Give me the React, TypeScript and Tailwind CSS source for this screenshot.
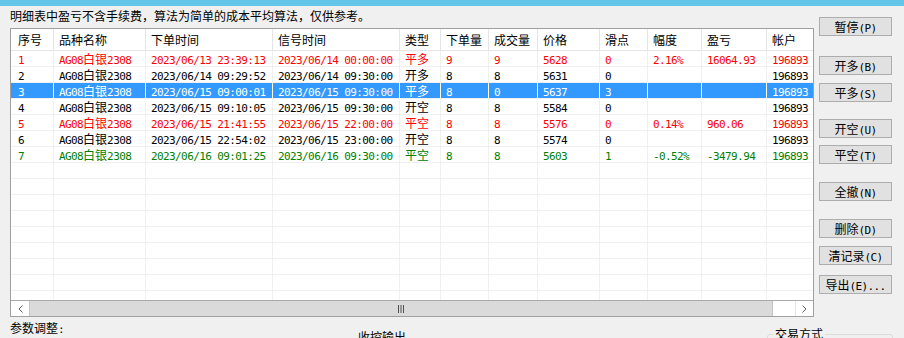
import React from "react";

type Tone = "red" | "black" | "green" | "sel";

type Row = {
  tone: Tone;
  cells: string[];
};

const HEADERS = ["序号", "品种名称", "下单时间", "信号时间", "类型", "下单量", "成交量", "价格", "滑点", "幅度", "盈亏", "帐户"];

const ROWS: Row[] = [
  { tone: "red", cells: ["1", "AG08白银2308", "2023/06/13 23:39:13", "2023/06/14 00:00:00", "平多", "9", "9", "5628", "0", "2.16%", "16064.93", "196893"] },
  { tone: "black", cells: ["2", "AG08白银2308", "2023/06/14 09:29:52", "2023/06/14 09:30:00", "开多", "8", "8", "5631", "0", "", "", "196893"] },
  { tone: "sel", cells: ["3", "AG08白银2308", "2023/06/15 09:00:01", "2023/06/15 09:30:00", "平多", "8", "0", "5637", "3", "", "", "196893"] },
  { tone: "black", cells: ["4", "AG08白银2308", "2023/06/15 09:10:05", "2023/06/15 09:30:00", "开空", "8", "8", "5584", "0", "", "", "196893"] },
  { tone: "red", cells: ["5", "AG08白银2308", "2023/06/15 21:41:55", "2023/06/15 22:00:00", "平空", "8", "8", "5576", "0", "0.14%", "960.06", "196893"] },
  { tone: "black", cells: ["6", "AG08白银2308", "2023/06/15 22:54:02", "2023/06/15 23:00:00", "开空", "8", "8", "5574", "0", "", "", "196893"] },
  { tone: "green", cells: ["7", "AG08白银2308", "2023/06/16 09:01:25", "2023/06/16 09:30:00", "平空", "8", "8", "5603", "1", "-0.52%", "-3479.94", "196893"] },
];

const EMPTY_ROWS = 9;

const TONE: Record<Tone, string> = {
  red: "text-[#ff0000]",
  black: "text-black",
  green: "text-[#008000]",
  sel: "bg-[#3399ff] text-white",
};

const GRID = "grid grid-cols-[43px_92px_127px_127px_41px_48px_49px_62px_48px_54px_65px_60px]";

// latin runs in a mono face (SimSun-like 6px cells), CJK in Noto
function Txt({ s }: { s: string }) {
  const parts = s.match(/[\x00-\x7f]+|[^\x00-\x7f]+/g) ?? [];
  return (
    <>
      {parts.map((p, i) =>
        /^[\x00-\x7f]/.test(p) ? (
          <span key={i} className="font-['DejaVu_Sans_Mono',monospace] text-[11px] tracking-[-0.6px]">
            {p}
          </span>
        ) : (
          <span key={i}>{p}</span>
        )
      )}
    </>
  );
}

function Chevron({ dir }: { dir: "left" | "right" }) {
  return (
    <svg width="5" height="8" viewBox="0 0 5 8" fill="none">
      <path
        d={dir === "left" ? "M4.5 0.5 L1 4 L4.5 7.5" : "M0.5 0.5 L4 4 L0.5 7.5"}
        stroke="#606060"
        strokeWidth="1"
      />
    </svg>
  );
}

function Btn({ label, className }: { label: string; className: string }) {
  return (
    <button
      className={`h-[19px] w-[73px] border border-[#adadad] bg-[#e1e1e1] text-center leading-[17px] whitespace-nowrap ${className}`}
    >
      <Txt s={label} />
    </button>
  );
}

export default function App() {
  return (
    <div className="h-[338px] w-[904px] overflow-hidden bg-[#f0f0f0] font-['Noto_Sans_CJK_SC',sans-serif] text-[12px] text-black">
      <div className="h-[6px] bg-[#63c6e9]" />

      <div className="flex">
        <div className="ml-[10px] w-[804px]">
          <div className="h-[22px] whitespace-nowrap leading-[19px]">
            明细表中盈亏不含手续费，算法为简单的成本平均算法，仅供参考。
          </div>

          <div className="flex h-[289px] flex-col overflow-hidden border border-[#a0a0a0] bg-white">
            <div className="flex-1 overflow-hidden">
              <div className={`${GRID} h-[22px] border-b border-[#e5e5e5]`}>
                {HEADERS.map((h, i) => (
                  <div
                    key={h}
                    className={`overflow-hidden whitespace-nowrap border-r border-[#e5e5e5] leading-[21px] ${i === 0 ? "pl-[7px]" : "pl-[5px]"}`}
                  >
                    {h}
                  </div>
                ))}
              </div>

              {ROWS.map((r, ri) => (
                <div key={ri} className={`${GRID} h-[16px] border-b border-[#f0f0f0] ${TONE[r.tone]}`}>
                  {r.cells.map((c, i) => (
                    <div
                      key={i}
                      className={`overflow-hidden whitespace-nowrap border-r leading-[15px] ${r.tone === "sel" ? "border-white" : "border-[#f0f0f0]"} ${i === 0 ? "pl-[7px]" : "pl-[5px]"}`}
                    >
                      <Txt s={c} />
                    </div>
                  ))}
                </div>
              ))}

              {Array.from({ length: EMPTY_ROWS }).map((_, ri) => (
                <div key={ri} className={`${GRID} h-[16px] border-b border-[#f0f0f0]`}>
                  {HEADERS.map((h) => (
                    <div key={h} className="border-r border-[#f0f0f0]" />
                  ))}
                </div>
              ))}
            </div>

            <div className="flex h-[16px] border-t border-[#a9a9a9]">
              <div className="flex w-[18px] items-center justify-center bg-white">
                <Chevron dir="left" />
              </div>
              <div className="flex w-[744px] items-center justify-center border-x border-[#c4c4c4] bg-[#dadada]">
                <svg width="6" height="8" viewBox="0 0 6 8">
                  <rect x="0" y="0" width="1" height="8" fill="#505050" />
                  <rect x="2.5" y="0" width="1" height="8" fill="#505050" />
                  <rect x="5" y="0" width="1" height="8" fill="#505050" />
                </svg>
              </div>
              <div className="flex-1 bg-white" />
              <div className="flex w-[18px] items-center justify-center border-l border-[#e6e6e6] bg-white">
                <Chevron dir="right" />
              </div>
            </div>
          </div>
        </div>

        <div className="ml-[5px] flex w-[73px] flex-col">
          <Btn label="暂停(P)" className="mt-[11px]" />
          <Btn label="开多(B)" className="mt-[20px]" />
          <Btn label="平多(S)" className="mt-[8px]" />
          <Btn label="开空(U)" className="mt-[17px]" />
          <Btn label="平空(T)" className="mt-[7px]" />
          <Btn label="全撤(N)" className="mt-[18px]" />
          <Btn label="删除(D)" className="mt-[18px]" />
          <Btn label="清记录(C)" className="mt-[8px]" />
          <Btn label="导出(E)..." className="mt-[10px]" />
        </div>
      </div>

      <div className="flex items-start">
        <div className="ml-[10px] mt-[3px] whitespace-nowrap leading-[16px]">
          <Txt s="参数调整:" />
        </div>
        <div className="ml-[294px] mt-[12px] whitespace-nowrap leading-[16px]">收控输出</div>
        <fieldset className="ml-auto mr-[11px] mt-[10px] h-[40px] w-[126px] rounded-[3px] border border-[#dcdcdc] pl-[5px]">
          <legend className="px-[2px] leading-[14px]">交易方式</legend>
        </fieldset>
      </div>
    </div>
  );
}
